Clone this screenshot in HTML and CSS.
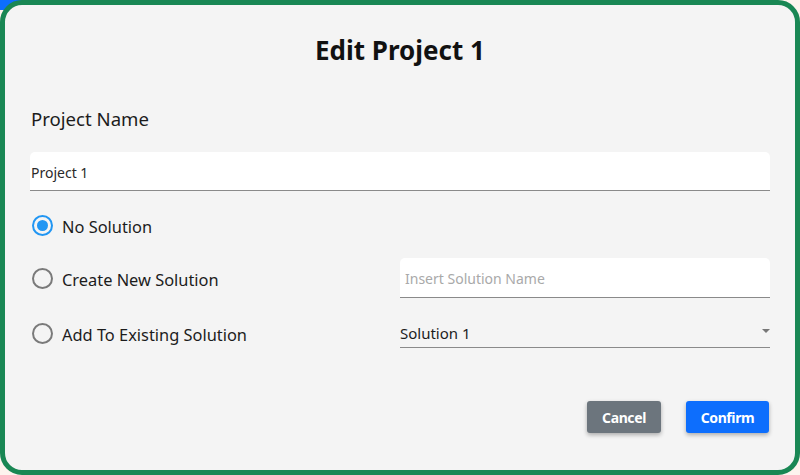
FILE: index.html
```html
<!DOCTYPE html>
<html lang="en">
<head>
<meta charset="utf-8">
<title>Edit Project 1</title>
<link rel="stylesheet" href="styles.css">
</head>
<body>
<div class="corner-tab"></div>
<div class="dialog">
  <h1 class="title">Edit Project 1</h1>
  <label class="field-label" for="pname">Project Name</label>
  <input id="pname" class="text-input" type="text" value="Project 1">
  <div class="options">
    <div class="option-row row-1">
      <label class="radio-label">
        <span class="radio checked"></span>
        <span class="radio-text">No Solution</span>
      </label>
    </div>
    <div class="option-row row-2">
      <label class="radio-label">
        <span class="radio"></span>
        <span class="radio-text">Create New Solution</span>
      </label>
      <input class="text-input side-input" type="text" placeholder="Insert Solution Name">
    </div>
    <div class="option-row row-3">
      <label class="radio-label">
        <span class="radio"></span>
        <span class="radio-text">Add To Existing Solution</span>
      </label>
      <div class="select">
        <span class="select-value">Solution 1</span>
        <span class="select-arrow"></span>
      </div>
    </div>
  </div>
  <div class="actions">
    <button class="btn btn-cancel" type="button">Cancel</button>
    <button class="btn btn-confirm" type="button">Confirm</button>
  </div>
</div>
</body>
</html>
```

FILE: styles.css
```css
html, body {
  margin: 0;
  padding: 0;
}

body {
  background: #fdf4ee;
  font-family: "Noto Sans", "Open Sans", "Liberation Sans", sans-serif;
  color: #1c1c1c;
  width: 800px;
  height: 475px;
  overflow: hidden;
  position: relative;
}

.corner-tab {
  position: absolute;
  left: 0;
  top: 0;
  width: 26px;
  height: 10px;
  background: #0d6efd;
}

.dialog {
  position: relative;
  box-sizing: border-box;
  width: 800px;
  height: 475px;
  border: 5px solid #198754;
  border-radius: 22px;
  background: #f4f4f4;
  padding: 27px 25px 0;
  display: flex;
  flex-direction: column;
}

.title {
  margin: 0;
  font-size: 26px;
  line-height: 36px;
  font-weight: 700;
  text-align: center;
  color: #111;
}

.field-label {
  margin-top: 39px;
  font-size: 18.6px;
  line-height: 24px;
  color: #1c1c1c;
  padding-left: 1px;
}

.text-input {
  box-sizing: border-box;
  margin: 21px 0 0;
  width: 100%;
  height: 39px;
  border: none;
  border-bottom: 1px solid #8a8a8a;
  border-radius: 5px 5px 0 0;
  background: #fff;
  padding: 2px 1px 0;
  font-family: inherit;
  font-size: 14px;
  color: #2a2a2a;
  outline: none;
}

.text-input::placeholder {
  color: #a9a9a9;
}

.options {
  display: flex;
  flex-direction: column;
}

.option-row {
  display: flex;
  align-items: center;
  height: 40px;
}

.row-1 { margin-top: 14px; }
.row-2 { margin-top: 13px; }
.row-3 { margin-top: 15px; }

.radio-label {
  width: 370px;
  flex: none;
  display: flex;
  align-items: center;
}

.radio {
  box-sizing: border-box;
  width: 21px;
  height: 21px;
  margin-left: 2px;
  border: 2px solid #7a7a7a;
  border-radius: 50%;
  display: flex;
  align-items: center;
  justify-content: center;
}

.radio.checked {
  border-color: #2196f3;
}

.radio.checked::after {
  content: "";
  width: 11px;
  height: 11px;
  border-radius: 50%;
  background: #2196f3;
}

.radio-text {
  margin-left: 9px;
  font-size: 16.4px;
  line-height: 22px;
  padding-top: 3px;
  color: #1c1c1c;
}

.side-input {
  margin: 0;
  flex: 1;
  height: 40px;
  padding: 2px 5px 0;
}

.select {
  box-sizing: border-box;
  flex: 1;
  height: 30px;
  border-bottom: 1px solid #8a8a8a;
  display: flex;
  align-items: center;
  justify-content: space-between;
}

.select-value {
  font-size: 15px;
  color: #1c1c1c;
}

.select-arrow {
  width: 0;
  height: 0;
  border-left: 4px solid transparent;
  border-right: 4px solid transparent;
  border-top: 4px solid #777;
  margin-top: -3px;
}

.actions {
  margin-top: 48px;
  display: flex;
  justify-content: flex-end;
  gap: 25px;
  padding-right: 1px;
}

.btn {
  height: 32px;
  border: none;
  border-radius: 3px;
  color: #fff;
  font-family: inherit;
  font-size: 14px;
  font-weight: 700;
  letter-spacing: -0.4px;
  box-shadow: 0 2px 4px rgba(0, 0, 0, 0.3);
  padding: 0;
}

.btn-cancel {
  width: 74px;
  background: #6c757d;
}

.btn-confirm {
  width: 83px;
  background: #0d6efd;
}
```
